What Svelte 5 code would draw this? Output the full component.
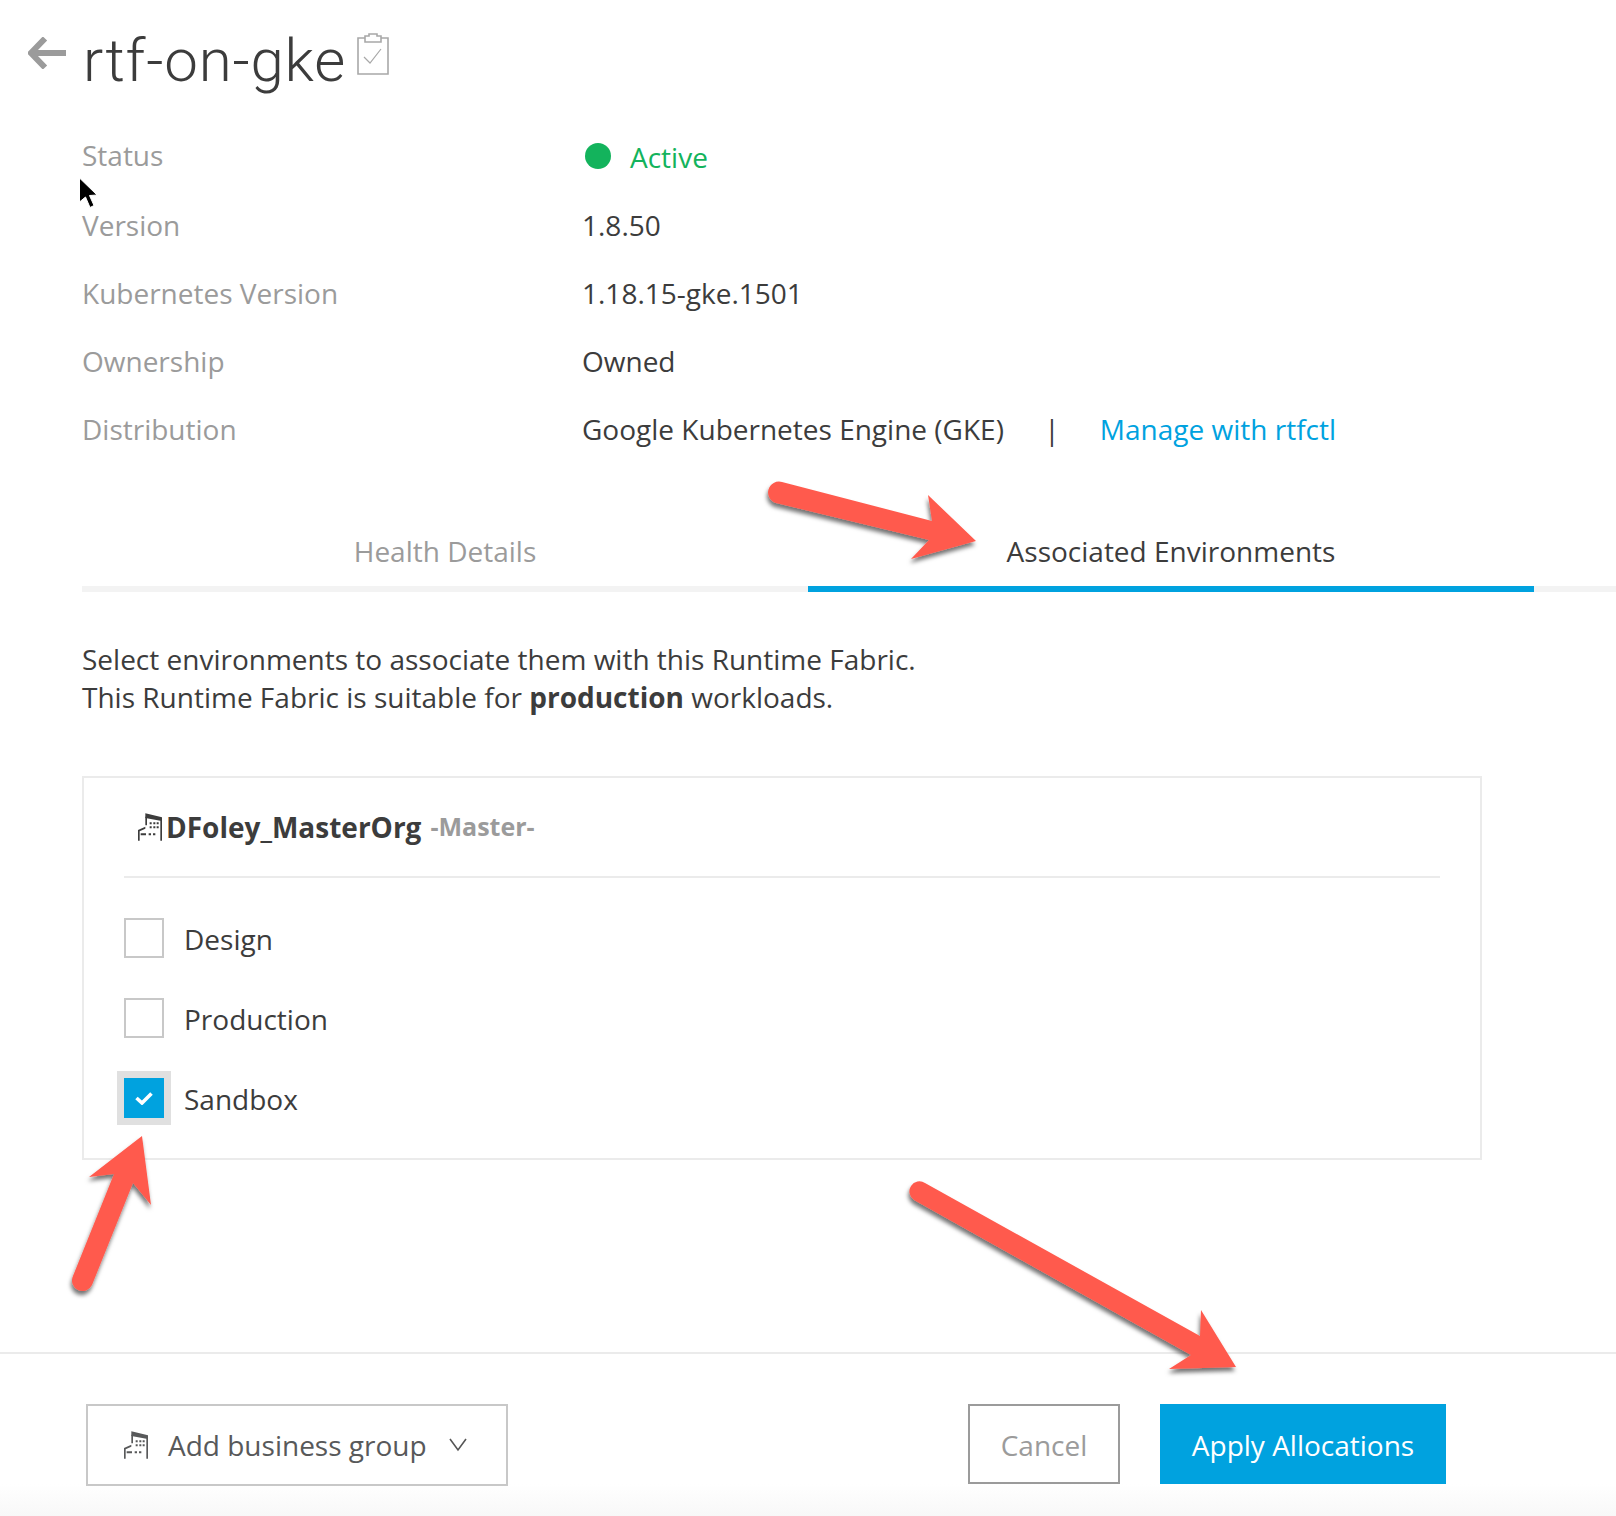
<script>
  const details = [
    { label: "Version", value: "1.8.50" },
    { label: "Kubernetes Version", value: "1.18.15-gke.1501" },
    { label: "Ownership", value: "Owned" }
  ];

  const environments = [
    { name: "Design", checked: false },
    { name: "Production", checked: false },
    { name: "Sandbox", checked: true }
  ];
</script>

{#snippet building()}
  <svg class="building" viewBox="0 0 72 82" aria-hidden="true">
    <path d="M22 0 L72 12 V82 H67 V22 L22 14 Z" fill="currentColor" />
    <path d="M22 10 H27 V36 H22 Z M0 82 V50 L22 40 V46 L5 54 V82 Z" fill="currentColor" />
    <path d="M35 27h6v6h-6zM46 27h6v6h-6zM56 27h6v6h-6zM35 39h6v6h-6zM46 39h6v6h-6zM56 39h6v6h-6zM8 60h16v6H8zM32 60h7v6h-7zM45 60h7v6h-7z" fill="currentColor" />
  </svg>
{/snippet}

<div class="page">
  <header class="title-row">
    <svg class="back" viewBox="0 0 38 32" aria-hidden="true">
      <path d="M17 1.5 L3 16 L17 30.5 M4 16 H38" fill="none" stroke="#9b9b9b" stroke-width="6" />
    </svg>
    <h1>rtf-on-gke</h1>
    <svg class="clipboard" viewBox="0 0 32 42" aria-hidden="true">
      <path d="M8 5 H1 V41 H31 V5 H24" fill="none" stroke="#a8a8a8" stroke-width="1.6" />
      <path d="M8 3 H12 V1 H20 V3 H24 V9 H8 Z" fill="none" stroke="#a8a8a8" stroke-width="1.6" />
      <path d="M7 24 L13 30 L24 16" fill="none" stroke="#a8a8a8" stroke-width="1.2" />
    </svg>
  </header>

  <section class="details">
    <div class="row first">
      <span class="label">Status</span>
      <span class="value active"><i class="dot"></i>Active</span>
    </div>
    {#each details as item}
      <div class="row">
        <span class="label">{item.label}</span>
        <span class="value">{item.value}</span>
      </div>
    {/each}
    <div class="row">
      <span class="label">Distribution</span>
      <span class="value">
        Google Kubernetes Engine (GKE)
        <span class="sep">|</span>
        <a href="#manage">Manage with rtfctl</a>
      </span>
    </div>
  </section>

  <nav class="tabs">
    <button class="tab">Health Details</button>
    <button class="tab selected">Associated Environments</button>
  </nav>

  <main class="content">
    <p class="intro">
      Select environments to associate them with this Runtime Fabric.<br />
      This Runtime Fabric is suitable for <strong>production</strong> workloads.
    </p>

    <div class="org-card">
      <div class="org-head">
        {@render building()}
        <span class="org-name">DFoley_MasterOrg</span>
        <span class="org-tag">-Master-</span>
      </div>
      <ul class="env-list">
        {#each environments as env}
          <li>
            <span class="box" class:checked={env.checked}>
              {#if env.checked}
                <svg viewBox="0 0 18 14" aria-hidden="true">
                  <path d="M1.5 7 L7 12 L16.5 2.5" fill="none" stroke="#fff" stroke-width="3.6" />
                </svg>
              {/if}
            </span>
            <span class="env-name">{env.name}</span>
          </li>
        {/each}
      </ul>
    </div>
  </main>

  <footer class="footer">
    <button class="add-group">
      {@render building()}
      <span>Add business group</span>
      <svg class="chevron" viewBox="0 0 18 14" aria-hidden="true">
        <path d="M1 1 L9 12 L17 1" fill="none" stroke="#555" stroke-width="1.6" />
      </svg>
    </button>
    <div class="actions">
      <button class="cancel">Cancel</button>
      <button class="apply">Apply Allocations</button>
    </div>
  </footer>

  <!-- annotations drawn over the screenshot -->
  <svg class="overlay" viewBox="0 0 1616 1516" aria-hidden="true">
    <defs>
      <filter id="arrow-shadow" x="-20%" y="-20%" width="140%" height="140%">
        <feDropShadow dx="-1" dy="4" stdDeviation="2" flood-color="#000" flood-opacity="0.55" />
      </filter>
    </defs>
    <g fill="#ff5a4d" filter="url(#arrow-shadow)">
      <path d="M782 482 L932 521 L928 495 L976 541 L911 559 L929 540 L776 503 A10.5 10.5 0 0 1 782 482 Z" />
      <path d="M142 1136 L89 1177 L114 1174 L73 1276 A10.5 10.5 0 0 0 92 1285 L133 1183 L151 1205 Z" />
      <path d="M925 1183 L1200 1336 L1201 1310 L1236 1367 L1169 1369 L1191 1355 L914 1200 A10 10 0 0 1 925 1183 Z" />
    </g>
    <path d="M79.5 178 V202 L85.5 197 L90 207.5 L94 205.5 L89.5 195.5 L97 195 Z" fill="#000" stroke="#fff" stroke-width="1" />
  </svg>
</div>

<style>
  :global(body) {
    font-family: "Open Sans", sans-serif;
    color: #3c3c3c;
    background: #fff;
  }

  .page {
    position: relative;
    width: 1616px;
    height: 1516px;
    overflow: hidden;
    display: flex;
    flex-direction: column;
    font-size: 28px;
  }

  .title-row {
    display: flex;
    align-items: flex-start;
    height: 121px;
    box-sizing: border-box;
    padding-left: 28px;
  }

  .back {
    width: 38px;
    height: 32px;
    margin-top: 37px;
  }

  h1 {
    margin: 21px 0 0 17px;
    font: 300 60px/80px Roboto, sans-serif;
    letter-spacing: 0.8px;
    color: #3c3c3c;
  }

  .clipboard {
    width: 32px;
    height: 42px;
    margin: 33px 0 0 11px;
  }

  .details {
    padding-left: 82px;
  }

  .row {
    display: grid;
    grid-template-columns: 500px 1fr;
    align-items: center;
    height: 68px;
  }

  .row.first {
    height: 70px;
    padding-bottom: 2px;
    box-sizing: border-box;
  }

  .label {
    color: #9b9b9b;
  }

  .value.active {
    display: flex;
    align-items: center;
    color: #13b35c;
    padding-top: 4px;
  }

  .dot {
    width: 26px;
    height: 26px;
    margin: 0 19px 2px 3px;
    border-radius: 50%;
    background: #13b35c;
  }

  .sep {
    margin: 0 33px;
  }

  a {
    color: #00a2df;
    text-decoration: none;
  }

  .tabs {
    display: flex;
    margin: 55px 0 0 82px;
    border-bottom: 6px solid #f3f3f3;
  }

  .tab {
    width: 726px;
    height: 74px;
    margin-bottom: -6px;
    padding: 0 0 2px;
    border: 0;
    border-bottom: 6px solid transparent;
    background: none;
    font: inherit;
    color: #9b9b9b;
  }

  .tab.selected {
    color: #3c3c3c;
    border-bottom-color: #00a2df;
  }

  .content {
    padding: 0 134px 0 82px;
  }

  .intro {
    margin: 48px 0 60px;
    line-height: 38px;
  }

  .org-card {
    height: 384px;
    box-sizing: border-box;
    padding: 0 40px;
    border: 2px solid #ebebeb;
  }

  .org-head {
    display: flex;
    align-items: center;
    height: 98px;
    padding: 0 0 0 14px;
    border-bottom: 2px solid #ebebeb;
  }

  .building {
    width: 24px;
    height: 28px;
    flex: none;
  }

  .org-head .building {
    margin-right: 4px;
  }

  .org-name {
    font-weight: 700;
  }

  .org-tag {
    margin: -2px 0 0 9px;
    font-size: 25px;
    font-weight: 700;
    color: #9b9b9b;
  }

  .env-list {
    list-style: none;
    margin: 40px 0 0;
    padding: 0;
    display: flex;
    flex-direction: column;
    gap: 40px;
  }

  .env-list li {
    display: flex;
    align-items: center;
    gap: 20px;
    height: 40px;
  }

  .env-name {
    padding-top: 2px;
  }

  .box {
    width: 40px;
    height: 40px;
    box-sizing: border-box;
    border: 2px solid #c8c8c8;
    display: flex;
    align-items: center;
    justify-content: center;
  }

  .box.checked {
    background: #00a2df;
    border: 0;
    outline: 7px solid #e0e0e0;
  }

  .box svg {
    width: 18px;
    height: 14px;
  }

  .footer {
    margin-top: 192px;
    flex: 1;
    display: flex;
    justify-content: space-between;
    padding: 50px 170px 0 86px;
    border-top: 2px solid #ebebeb;
    background: linear-gradient(#fff 130px, #f8f8f8);
  }

  .footer button {
    font: inherit;
    height: 80px;
    box-sizing: border-box;
  }

  .add-group {
    width: 422px;
    height: 82px !important;
    display: flex;
    align-items: center;
    padding: 0 0 0 36px;
    border: 2px solid #c8c8c8;
    background: #fff;
    color: #58595a;
  }

  .add-group .building {
    margin-right: 20px;
  }

  .chevron {
    width: 18px;
    height: 14px;
    margin-left: 22px;
  }

  .actions {
    display: flex;
    gap: 40px;
  }

  .cancel {
    width: 152px;
    padding: 2px 0 0;
    border: 2px solid #9b9b9b;
    background: #fff;
    color: #9b9b9b;
  }

  .apply {
    width: 286px;
    padding: 2px 0 0;
    border: 0;
    background: #00a2df;
    color: #fff;
  }

  .overlay {
    position: absolute;
    inset: 0;
    width: 1616px;
    height: 1516px;
    pointer-events: none;
  }
</style>
